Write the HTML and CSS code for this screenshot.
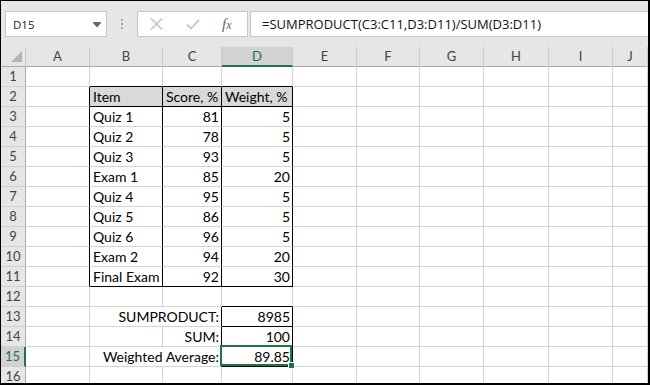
FILE: index.html
```html
<!DOCTYPE html>
<html lang="en">
<head>
    <meta charset="UTF-8">
    <title>Weighted Average</title>
    <link rel="stylesheet" href="styles.css">
</head>
<body>
<div class="window">
    <div class="toolbar">
        <div class="namebox">
            <span>D15</span>
            <svg class="arrow" width="8" height="5" viewBox="0 0 8 5"><polygon points="0,0 8,0 8,1 4.5,5 3.5,5 0,1" fill="#6b6b6b"/></svg>
        </div>
        <div class="grip"><i></i><i></i><i></i></div>
        <div class="fbuttons">
            <svg class="cancel" width="13" height="12" viewBox="0 0 13 12"><path d="M1 0.5 L12 11.5 M12 0.5 L1 11.5" stroke="#c3c3c3" stroke-width="1.6" fill="none"/></svg>
            <svg class="enter" width="14" height="11" viewBox="0 0 14 11"><path d="M1 5.5 L5 9.5 L13 1" stroke="#c3c3c3" stroke-width="1.8" fill="none"/></svg>
            <span class="fx"><i>f</i><i class="x">x</i></span>
        </div>
        <div class="formula">=SUMPRODUCT(C3:C11,D3:D11)/SUM(D3:D11)</div>
    </div>

    <div class="sheet">
        <div class="row head">
            <div class="c ch corner"><svg width="24" height="19" viewBox="0 0 24 19"><polygon points="21,4 21,15 10,15" fill="#b4b4b4"/></svg></div>
            <div class="c ch">A</div>
            <div class="c ch">B</div>
            <div class="c ch">C</div>
            <div class="c ch sel">D</div>
            <div class="c ch">E</div>
            <div class="c ch">F</div>
            <div class="c ch">G</div>
            <div class="c ch">H</div>
            <div class="c ch">I</div>
            <div class="c ch">J</div>
        </div>

        <div class="row">
            <div class="c rh">1</div>
            <div class="c"></div>
            <div class="c bb"></div>
            <div class="c bb"></div>
            <div class="c bb"></div>
            <div class="c"></div><div class="c"></div><div class="c"></div><div class="c"></div><div class="c"></div><div class="c"></div>
        </div>

        <div class="row">
            <div class="c rh">2</div>
            <div class="c br"></div>
            <div class="c hd br bb">Item</div>
            <div class="c hd br bb">Score, %</div>
            <div class="c hd br bb">Weight, %</div>
            <div class="c"></div><div class="c"></div><div class="c"></div><div class="c"></div><div class="c"></div><div class="c"></div>
        </div>

        <div class="row">
            <div class="c rh">3</div>
            <div class="c br"></div>
            <div class="c br">Quiz 1</div>
            <div class="c br num">81</div>
            <div class="c br num">5</div>
            <div class="c"></div><div class="c"></div><div class="c"></div><div class="c"></div><div class="c"></div><div class="c"></div>
        </div>

        <div class="row">
            <div class="c rh">4</div>
            <div class="c br"></div>
            <div class="c br">Quiz 2</div>
            <div class="c br num">78</div>
            <div class="c br num">5</div>
            <div class="c"></div><div class="c"></div><div class="c"></div><div class="c"></div><div class="c"></div><div class="c"></div>
        </div>

        <div class="row">
            <div class="c rh">5</div>
            <div class="c br"></div>
            <div class="c br">Quiz 3</div>
            <div class="c br num">93</div>
            <div class="c br num">5</div>
            <div class="c"></div><div class="c"></div><div class="c"></div><div class="c"></div><div class="c"></div><div class="c"></div>
        </div>

        <div class="row">
            <div class="c rh">6</div>
            <div class="c br"></div>
            <div class="c br">Exam 1</div>
            <div class="c br num">85</div>
            <div class="c br num">20</div>
            <div class="c"></div><div class="c"></div><div class="c"></div><div class="c"></div><div class="c"></div><div class="c"></div>
        </div>

        <div class="row">
            <div class="c rh">7</div>
            <div class="c br"></div>
            <div class="c br">Quiz 4</div>
            <div class="c br num">95</div>
            <div class="c br num">5</div>
            <div class="c"></div><div class="c"></div><div class="c"></div><div class="c"></div><div class="c"></div><div class="c"></div>
        </div>

        <div class="row">
            <div class="c rh">8</div>
            <div class="c br"></div>
            <div class="c br">Quiz 5</div>
            <div class="c br num">86</div>
            <div class="c br num">5</div>
            <div class="c"></div><div class="c"></div><div class="c"></div><div class="c"></div><div class="c"></div><div class="c"></div>
        </div>

        <div class="row">
            <div class="c rh">9</div>
            <div class="c br"></div>
            <div class="c br">Quiz 6</div>
            <div class="c br num">96</div>
            <div class="c br num">5</div>
            <div class="c"></div><div class="c"></div><div class="c"></div><div class="c"></div><div class="c"></div><div class="c"></div>
        </div>

        <div class="row">
            <div class="c rh">10</div>
            <div class="c br"></div>
            <div class="c br">Exam 2</div>
            <div class="c br num">94</div>
            <div class="c br num">20</div>
            <div class="c"></div><div class="c"></div><div class="c"></div><div class="c"></div><div class="c"></div><div class="c"></div>
        </div>

        <div class="row">
            <div class="c rh">11</div>
            <div class="c br"></div>
            <div class="c br bb">Final Exam</div>
            <div class="c br bb num">92</div>
            <div class="c br bb num">30</div>
            <div class="c"></div><div class="c"></div><div class="c"></div><div class="c"></div><div class="c"></div><div class="c"></div>
        </div>

        <div class="row">
            <div class="c rh">12</div>
            <div class="c"></div>
            <div class="c"></div>
            <div class="c"></div>
            <div class="c bb"></div>
            <div class="c"></div><div class="c"></div><div class="c"></div><div class="c"></div><div class="c"></div><div class="c"></div>
        </div>

        <div class="row">
            <div class="c rh">13</div>
            <div class="c"></div>
            <div class="c span br num">SUMPRODUCT:</div>
            <div class="c br bb num">8985</div>
            <div class="c"></div><div class="c"></div><div class="c"></div><div class="c"></div><div class="c"></div><div class="c"></div>
        </div>

        <div class="row">
            <div class="c rh">14</div>
            <div class="c"></div>
            <div class="c"></div>
            <div class="c br num">SUM:</div>
            <div class="c br bb num">100</div>
            <div class="c"></div><div class="c"></div><div class="c"></div><div class="c"></div><div class="c"></div><div class="c"></div>
        </div>

        <div class="row">
            <div class="c rh sel">15</div>
            <div class="c"></div>
            <div class="c span br num">Weighted Average:</div>
            <div class="c br bb num active">89.85</div>
            <div class="c"></div><div class="c"></div><div class="c"></div><div class="c"></div><div class="c"></div><div class="c"></div>
        </div>

        <div class="row">
            <div class="c rh">16</div>
            <div class="c"></div>
            <div class="c"></div>
            <div class="c"></div>
            <div class="c"></div>
            <div class="c"></div><div class="c"></div><div class="c"></div><div class="c"></div><div class="c"></div><div class="c"></div>
        </div>
    </div>
</div>
</body>
</html>
```

FILE: styles.css
```css
body {
    margin: 0;
    background: #fff;
}

.window {
    width: 650px;
    height: 385px;
    box-sizing: border-box;
    border-style: solid;
    border-color: #000;
    border-width: 1px 2px 2px 1px;
    overflow: hidden;
    background: #fff;
}

/* formula bar */
.toolbar {
    height: 46px;
    background: #e6e6e6;
    display: flex;
    align-items: center;
}

.namebox {
    margin-left: 4px;
    width: 102px;
    height: 26px;
    box-sizing: border-box;
    border: 1px solid #c6c6c6;
    background: #fff;
    display: flex;
    align-items: center;
    justify-content: space-between;
    padding: 0 5px 0 7px;
    font-family: "Open Sans", sans-serif;
    font-size: 11.5px;
    color: #222;
}

.grip {
    margin-left: 14px;
    width: 2px;
    display: flex;
    flex-direction: column;
    gap: 2px;
}

.grip i {
    display: block;
    width: 2px;
    height: 2px;
    background: #a6a6a6;
}

.fbuttons {
    margin-left: 14px;
    width: 111px;
    height: 26px;
    box-sizing: border-box;
    border: 1px solid #c6c6c6;
    background: #fff;
    display: flex;
    align-items: center;
    padding-left: 12px;
}

.fbuttons .enter {
    margin-left: 23px;
}

.fx {
    margin-left: 22px;
    font-family: "Liberation Serif", serif;
    font-size: 15px;
    color: #666;
}

.fx .x {
    font-size: 12px;
}

.formula {
    flex: 1;
    margin-left: 2px;
    height: 26px;
    box-sizing: border-box;
    border: 1px solid #c6c6c6;
    border-right: none;
    background: #fff;
    padding-left: 11px;
    font-family: "Open Sans", sans-serif;
    font-size: 13px;
    line-height: 24px;
    color: #111;
    white-space: nowrap;
}

/* grid */
.row {
    display: grid;
    grid-template-columns: 25px 64px 73px 59px 71px 64px 63px 64px 65px 64px 1fr;
    height: 20px;
}

.c {
    box-sizing: border-box;
    border-right: 1px solid #d4d4d4;
    border-bottom: 1px solid #d4d4d4;
    padding: 0 3px;
    font-family: Lato, sans-serif;
    font-size: 14px;
    line-height: 19px;
    color: #000;
    white-space: nowrap;
    overflow: hidden;
}

.num {
    text-align: right;
    padding-right: 2px;
}

.span {
    grid-column: span 2;
}

.ch {
    background: #e6e6e6;
    border-right-color: #c9c9c9;
    border-bottom-color: #ababab;
    text-align: center;
    color: #444;
    font-size: 13px;
}

.corner {
    padding: 0;
}

.corner svg {
    display: block;
}

.rh {
    background: #e6e6e6;
    border-right-color: #ababab;
    border-bottom-color: #d0d0d0;
    text-align: center;
    padding: 0;
    color: #444;
    font-size: 13px;
}

.ch.sel {
    background: #d2d2d2;
    color: #217346;
    border-bottom: 2px solid #217346;
}

.rh.sel {
    background: #d2d2d2;
    color: #217346;
    border-right: 2px solid #217346;
}

.hd {
    background: #d9d9d9;
}

.br {
    border-right-color: #000;
}

.bb {
    border-bottom-color: #000;
}

.active {
    position: relative;
    overflow: visible;
}

.active::after {
    content: "";
    position: absolute;
    top: -2px;
    left: -2px;
    right: 0;
    bottom: 0;
    border: 2px solid #217346;
}

.active::before {
    content: "";
    position: absolute;
    right: -3px;
    bottom: -3px;
    width: 5px;
    height: 5px;
    background: #217346;
    border: 1px solid #fff;
    z-index: 1;
}
```
